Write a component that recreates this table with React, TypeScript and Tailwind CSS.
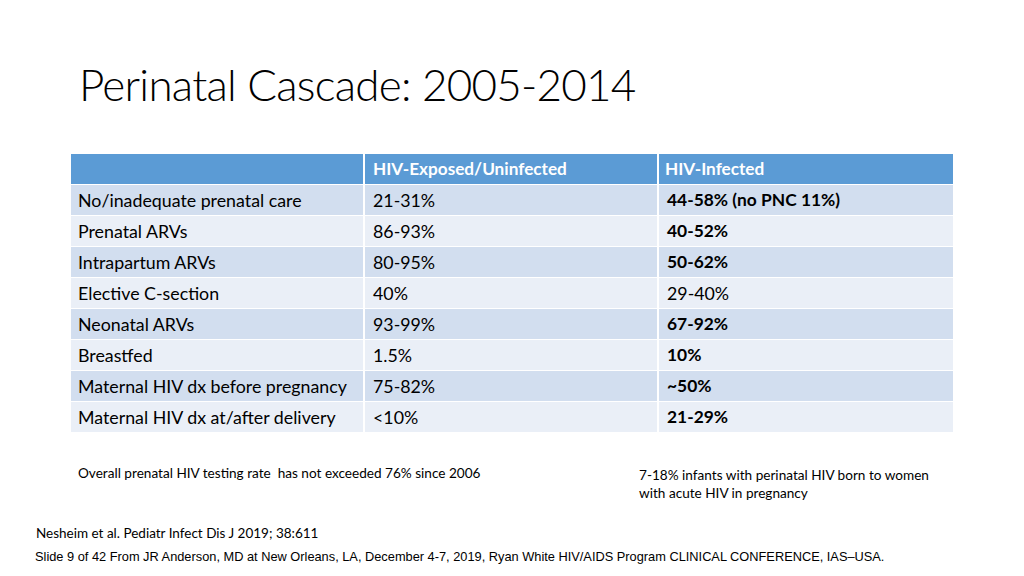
import React from "react";

const rows: [string, string, string, boolean][] = [
  ["No/inadequate prenatal care", "21-31%", "44-58% (no PNC 11%)", true],
  ["Prenatal ARVs", "86-93%", "40-52%", true],
  ["Intrapartum ARVs", "80-95%", "50-62%", true],
  ["Elective C-section", "40%", "29-40%", false],
  ["Neonatal ARVs", "93-99%", "67-92%", true],
  ["Breastfed", "1.5%", "10%", true],
  ["Maternal HIV dx before pregnancy", "75-82%", "~50%", true],
  ["Maternal HIV dx at/after delivery", "<10%", "21-29%", true],
];

const body = "font-['Lato','Open_Sans',sans-serif]";

export default function App() {
  return (
    <div className={`w-[1024px] h-[576px] bg-white text-black flex flex-col ${body}`}>
      <h1 className="mt-[58px] ml-[79px] h-[52px] text-[44px] leading-[52px] font-light tracking-[-0.75px]">
        Perinatal Cascade: 2005-2014
      </h1>

      <div className="mt-[44px] ml-[71px] w-[882px] flex flex-col gap-[1px] text-[17.8px]">
        <div className="grid grid-cols-[292px_294px_1fr] bg-[#5b9bd5] h-[30px] items-center font-bold text-white text-[17.2px]">
          <div />
          <div className="pl-[8px] border-l-2 border-white h-full flex items-center">HIV-Exposed/Uninfected</div>
          <div className="pl-[6px] border-l-2 border-white h-full flex items-center">HIV-Infected</div>
        </div>
        {rows.map(([label, a, b, bold], i) => (
          <div
            key={label}
            className={`grid grid-cols-[292px_294px_1fr] h-[30px] items-center ${i % 2 === 0 ? "bg-[#d2deef]" : "bg-[#eaeff7]"}`}
          >
            <div className="pl-[7px]">{label}</div>
            <div className="pl-[8px] border-l-2 border-white h-full flex items-center">{a}</div>
            <div className={`pl-[8px] border-l-2 border-white h-full flex items-center ${bold ? "font-bold text-[17.4px]" : ""}`}>{b}</div>
          </div>
        ))}
      </div>

      <div className="mt-[32px] flex text-[13.6px] leading-[18px]">
        <p className="ml-[78px] w-[561px]">Overall prenatal HIV testing rate&nbsp; has not exceeded 76% since 2006</p>
        <p className="mt-[2px] w-[320px]">
          7-18% infants with perinatal HIV born to women
          <br />
          with acute HIV in pregnancy
        </p>
      </div>

      <p className="mt-[22px] ml-[36px] text-[13.5px] leading-[18px]">Nesheim et al. Pediatr Infect Dis J 2019; 38:611</p>
      <p className="mt-[7px] ml-[35px] text-[12.8px] leading-[16px] font-['Liberation_Sans',Arial,sans-serif]">
        Slide 9 of 42 From JR Anderson, MD at New Orleans, LA, December 4-7, 2019, Ryan White HIV/AIDS Program CLINICAL CONFERENCE, IAS–USA.
      </p>
    </div>
  );
}
